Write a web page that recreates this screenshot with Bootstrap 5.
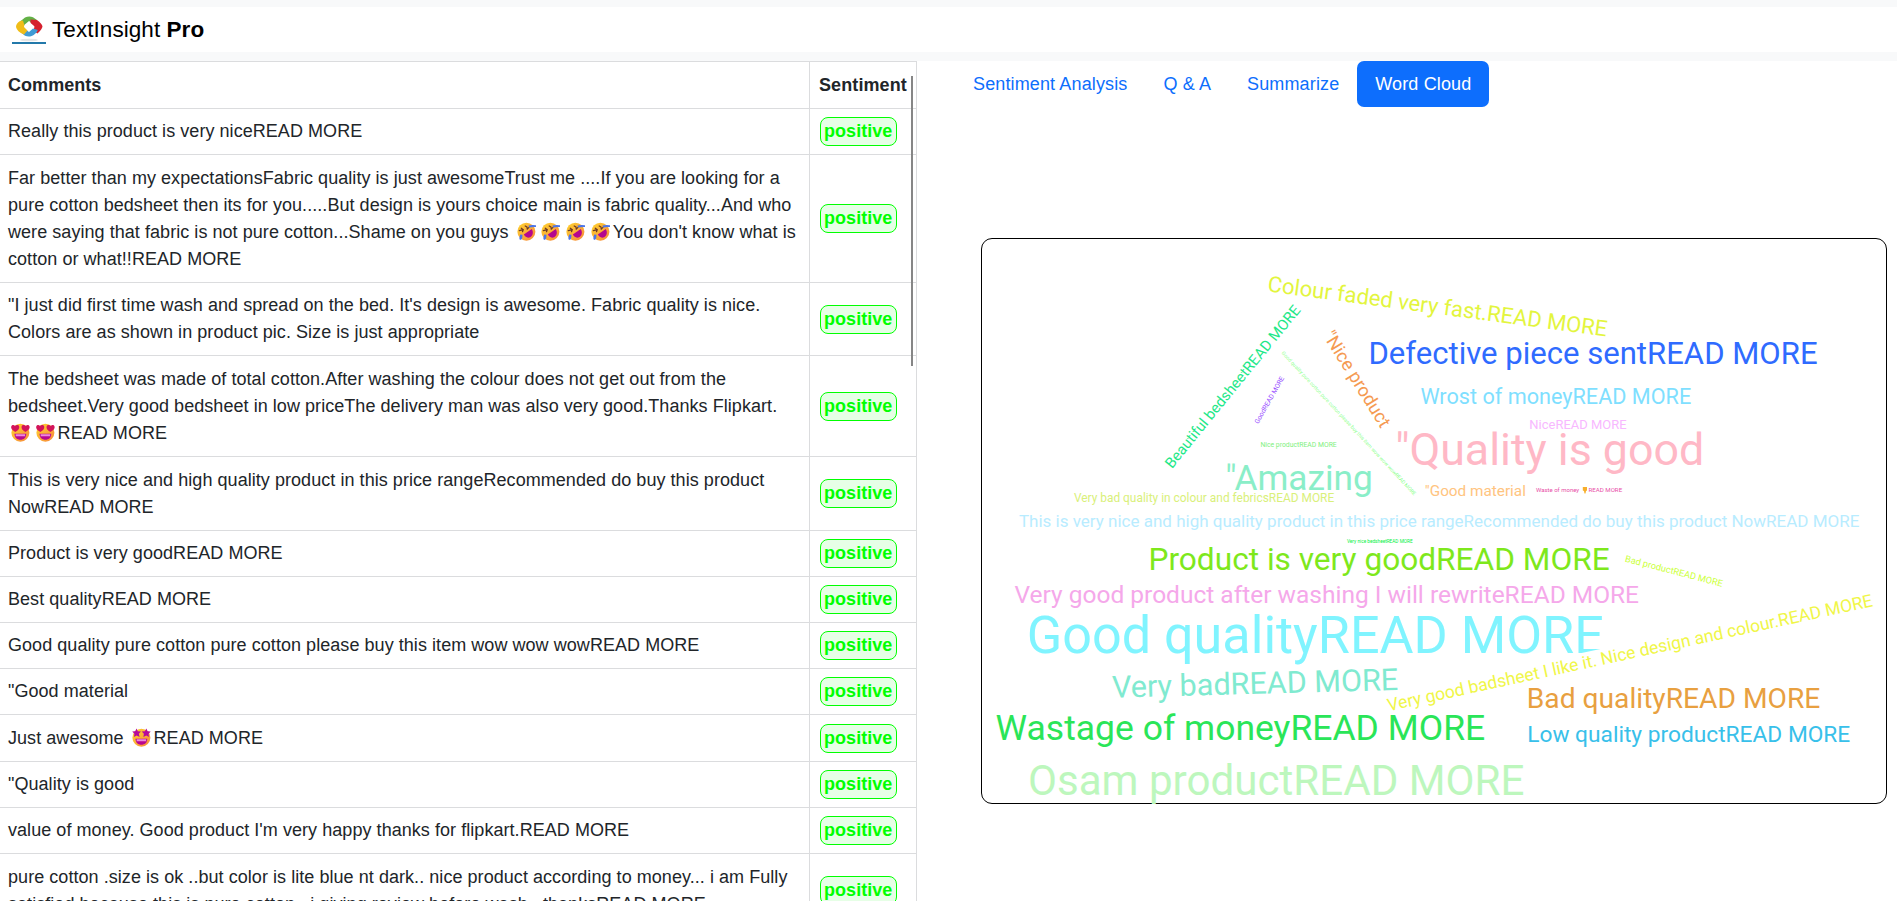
<!DOCTYPE html>
<html lang="en">
<head>
<meta charset="utf-8">
<meta name="viewport" content="width=device-width, initial-scale=1">
<title>TextInsight Pro</title>
<link href="https://cdn.jsdelivr.net/npm/bootstrap@5.3.0/dist/css/bootstrap.min.css" rel="stylesheet">
<style>
html{font-size:18px}
body{font-family:"Liberation Sans",Arial,sans-serif;height:901px;overflow:hidden;background:#fff}
.topbar{padding:7px 0 9px;background:#f8f9fa;height:61px}
.topbar .navbar{height:45px;padding:0 0 0 12px;background:#fff}
.topbar .navbar-brand{color:#000;font-size:22.5px;line-height:34px;padding:0;margin:0;letter-spacing:.06px}
.logo{width:34px;height:29px;margin-right:6px}
.panes{height:840px}
.comments{width:917px;overflow:hidden}
.comments .table{width:918px;margin-left:-1px;table-layout:fixed;color:#212529;border-collapse:collapse;letter-spacing:.052px}
.comments th,.comments td{padding:0 9px;vertical-align:middle;border:1px solid #dbdcde}
.comments th:first-child,.comments td:first-child{padding:0 8px}
.comments td:nth-child(2){padding-left:10px;padding-right:0}
.comments th:nth-child(2){padding-left:9px;padding-right:0;letter-spacing:.1px}
.comments th:first-child{width:810px}
.tag{display:inline-block;height:29px;line-height:26px;width:77px;padding-left:3px;border:1px solid #0f0;border-radius:8px;background:#e6ffe6;color:#0f0;font-weight:700;vertical-align:middle}
.h46{height:46px}.h47{height:47px}.h73{height:73px}.h74{height:74px}.h101{height:101px}.h128{height:128px}
.emo{width:24.8px;height:19px;vertical-align:-3.5px}
.thumb{position:absolute;left:911px;top:15px;width:2px;height:290px;background:#868686}
.tools{padding-left:38px;padding-right:10px}
.tools .nav-link{padding:9px 18px;line-height:28px;letter-spacing:.13px}
.tools .nav-pills .nav-link{border-radius:7px}
.cloud{display:block;width:906px;height:566px;margin:131px 0 0 26px;border:1px solid #000;border-radius:11px;overflow:visible;font-family:Roboto,sans-serif}
</style>
</head>
<body>
<svg width="0" height="0" class="position-absolute">
<defs>
<linearGradient id="face" x1="0" y1="0" x2="1" y2="1"><stop offset="0" stop-color="#ffd52e"/><stop offset="1" stop-color="#f7873d"/></linearGradient>
<symbol id="rofl" viewBox="0 0 24.8 19">
<circle cx="12.4" cy="9.7" r="9" fill="url(#face)"/>
<path d="M9.800 12.600 17.800 7c1.800 3 1.200 6.300-1.200 7.900-2.500 1.600-5.200.600-6.800-2.300z" fill="#b5068f"/>
<path d="M5.300 8.600l4-.900M7.300 6.200l2 1.500-.8 2M11.200 4l1.700.9.400 2.100 1.700-1.700" fill="none" stroke="#6b3a25" stroke-width="1.200" stroke-linecap="round"/>
<path d="M14.500 3.600q3-1 7.500-.300v1.700q-4-.2-6.800.4zM6.300 12.400l2.200.3q.3 3-1.500 5.300l-1.600-.8q-.1-2.600.900-4.800z" fill="#4c74e8"/>
</symbol>
<symbol id="star" viewBox="0 0 24.8 19">
<circle cx="12.4" cy="9.700" r="9" fill="url(#face)"/>
<path d="M7.500.5l1.300 2.800 3.200.200-2.200 2.300.8 3.200-3-1.500L5 9.100l.4-3.300L3.200 3.600l3-.4zM17.300.5l1.300 2.800 3.100.300-2.200 2.300.600 3.200-2.800-1.600-2.900 1.500.5-3.200L12.700 3.500l3.200-.300z" fill="#b5099c"/>
<path d="M6.500 10.700h11.800c-.2 4-2.500 6-5.900 6s-5.700-2-5.900-6z" fill="#b8078f"/><path d="M7.700 11.200h9.400v2H7.700z" fill="#ed8bdc"/>
</symbol>
<symbol id="heart" viewBox="0 0 24.8 19">
<circle cx="12.4" cy="9.700" r="9" fill="url(#face)"/>
<path d="M7.300 8.900C4 7.300 2.600 5.200 3.300 3.300c.7-1.700 2.900-1.700 3.700-.2 1-1.500 3.600-1.600 4.200.3.500 1.800-1 4.100-3.900 5.500zM17.500 8.900c-2.900-1.400-4.400-3.700-3.900-5.500.6-1.900 3.200-1.800 4.200-.3.800-1.500 3-1.500 3.700.2.700 1.900-.700 4-4 5.600z" fill="#d3145a"/>
<path d="M6.500 10.700h11.800c-.2 4-2.500 6-5.900 6s-5.700-2-5.900-6z" fill="#b8078f"/><path d="M7.700 11.200h9.400v2H7.700z" fill="#ed8bdc"/>
</symbol>
</defs>
</svg>

<header class="topbar">
<nav class="navbar d-flex justify-content-start align-items-center flex-nowrap">
<svg class="logo" viewBox="0 0 34 29">
<ellipse cx="17" cy="25" rx="9" ry="1.300" fill="#e3e5e6"/>
<path d="M8 6.500Q10 5 13 2.500 17 .6 21 2.200l4 2.800-4.500 3.500-3.500-2.500-6 5z" fill="#62b146"/>
<path d="M18.500 4.500l6.500.5q5 3.500 5.500 6.500-.5 3-5 7L21.500 16l1-4.500-4-3.500z" fill="#d5212e"/>
<path d="M25.800 15Q24 19.500 19 21.300q-3 .7-6-.5L9 17.500l4-3.500 4 3 4-3.500z" fill="#3f9bd5"/>
<path d="M11 5.500l1.500 5-.5 1.500 3.500 3.500-3.500 4Q5 16.500 4 12q0-3.500 4-6z" fill="#f0bd18"/>
<path d="M17 7l5 4.200-5 4.600-5-4.600z" fill="#fff"/>
<path d="M0 27h34v2H0z" fill="#2379aa"/>
</svg>
<a class="navbar-brand" href="#">TextInsight <b>Pro</b></a>
</nav>
</header>

<main class="panes d-flex">
<section class="comments position-relative flex-shrink-0">
<table class="table mb-0">
<thead><tr class="h47"><th>Comments</th><th>Sentiment</th></tr></thead>
<tbody>
<tr class="h46"><td>Really this product is very niceREAD MORE</td><td><span class="tag">positive</span></td></tr>
<tr class="h128"><td>Far better than my expectationsFabric quality is just awesomeTrust me ....If you are looking for a<br>pure cotton bedsheet then its for you.....But design is yours choice main is fabric quality...And who<br>were saying that fabric is not pure cotton...Shame on you guys <svg class="emo"><use href="#rofl"/></svg><svg class="emo"><use href="#rofl"/></svg><svg class="emo"><use href="#rofl"/></svg><svg class="emo"><use href="#rofl"/></svg>You don't know what is<br>cotton or what!!READ MORE</td><td><span class="tag">positive</span></td></tr>
<tr class="h73"><td>"I just did first time wash and spread on the bed. It's design is awesome. Fabric quality is nice.<br>Colors are as shown in product pic. Size is just appropriate</td><td><span class="tag">positive</span></td></tr>
<tr class="h101"><td>The bedsheet was made of total cotton.After washing the colour does not get out from the<br>bedsheet.Very good bedsheet in low priceThe delivery man was also very good.Thanks Flipkart.<br><svg class="emo"><use href="#heart"/></svg><svg class="emo"><use href="#heart"/></svg>READ MORE</td><td><span class="tag">positive</span></td></tr>
<tr class="h74"><td>This is very nice and high quality product in this price rangeRecommended do buy this product<br>NowREAD MORE</td><td><span class="tag">positive</span></td></tr>
<tr class="h46"><td>Product is very goodREAD MORE</td><td><span class="tag">positive</span></td></tr>
<tr class="h46"><td>Best qualityREAD MORE</td><td><span class="tag">positive</span></td></tr>
<tr class="h46"><td>Good quality pure cotton pure cotton please buy this item wow wow wowREAD MORE</td><td><span class="tag">positive</span></td></tr>
<tr class="h46"><td>"Good material</td><td><span class="tag">positive</span></td></tr>
<tr class="h47"><td>Just awesome <svg class="emo"><use href="#star"/></svg>READ MORE</td><td><span class="tag">positive</span></td></tr>
<tr class="h46"><td>"Quality is good</td><td><span class="tag">positive</span></td></tr>
<tr class="h46"><td>value of money. Good product I'm very happy thanks for flipkart.READ MORE</td><td><span class="tag">positive</span></td></tr>
<tr class="h74"><td>pure cotton .size is ok ..but color is lite blue nt dark.. nice product according to money... i am Fully<br>satisfied because this is pure cotton.. i giving review before wash.. thanksREAD MORE</td><td><span class="tag">positive</span></td></tr>
</tbody>
</table>
<div class="thumb"></div>
</section>

<section class="tools flex-grow-1">
<ul class="nav nav-pills">
<li class="nav-item"><a class="nav-link" href="#">Sentiment Analysis</a></li>
<li class="nav-item"><a class="nav-link" href="#">Q &amp; A</a></li>
<li class="nav-item"><a class="nav-link" href="#">Summarize</a></li>
<li class="nav-item"><a class="nav-link active" href="#">Word Cloud</a></li>
</ul>
<svg class="cloud" id="cloud" viewBox="982 239 904 564"></svg>
</section>
</main>

<script src="https://cdn.jsdelivr.net/npm/bootstrap@5.3.0/dist/js/bootstrap.bundle.min.js"></script>
<script>
// each word: text, baseline start x/y, baseline end x/y, colour
const words = [
['Colour faded very fast.READ MORE',1268,291.5,1605.7,336.3,'#e3f53e'],
['Defective piece sentREAD MORE',1370.9,363.7,1816.8,363.7,'#2f6bff'],
['Wrost of moneyREAD MORE',1420.8,404,1690.8,404,'#7fdfff'],
['NiceREAD MORE',1530.4,429,1626.3,429,'#f8b8ff'],
['"Quality is good',1397.8,465,1701.3,465,'#ffb8c6'],
['"Good material',1425.7,495.7,1524.8,495.7,'#ffc480'],
['Waste of money',1536,492,1579.3,492,'#e84fa8'],
['READ MORE',1589,492,1622,492,'#e84fa8'],
['"Amazing',1227.3,490,1370.7,490,'#8aeec8'],
['Very bad quality in colour and febricsREAD MORE',1074,502.3,1334,502.3,'#d9f07a'],
['This is very nice and high quality product in this price rangeRecommended do buy this product NowREAD MORE',1019.3,527.3,1859.3,527.3,'#b8ecff'],
['Very nice bedsheetREAD MORE',1347,543,1412.7,543,'#00f040'],
['Product is very goodREAD MORE',1151,569.7,1609,569.7,'#7ee81c'],
['Bad productREAD MORE',1625.3,561.7,1721.5,586.7,'#ccff3c'],
['Very good product after washing I will rewriteREAD MORE',1014.7,603,1638.3,603,'#f5a8ea'],
['Good qualityREAD MORE',1029.3,652.7,1602.3,652.7,'#80f4ff'],
['Very good badsheet I like it. Nice design and colour.READ MORE',1389,711.1,1873,606.3,'#f0f648'],
['Very badREAD MORE',1112.5,697.7,1397.7,690,'#80ead0'],
['Bad qualityREAD MORE',1529,708,1819.7,708,'#e8a040'],
['Low quality productREAD MORE',1529,742,1849.7,742,'#38c0ea'],
['Wastage of moneyREAD MORE',996.3,739.7,1484.3,739.7,'#2ae558'],
['Osam productREAD MORE',1030,794.7,1523.3,794.7,'#bdf7bd'],
['Beautiful bedsheetREAD MORE',1172.7,468.3,1301,310.7,'#1ee888'],
['"Nice product',1323.3,336.7,1380.7,428.7,'#f59a52'],
['Good quality pure cotton pure cotton please buy this item wow wow wowREAD MORE',1281.5,353.5,1413.9,495.9,'#90ff90'],
['GoodREAD MORE',1258.3,424,1284.3,378.3,'#9a50ff'],
['Nice productREAD MORE',1261,446.7,1336.7,446.7,'#7ef07e']
];
const NS = 'http://www.w3.org/2000/svg', svg = document.getElementById('cloud');
const ctx = document.createElement('canvas').getContext('2d');
ctx.font = '100px Roboto, sans-serif';
function shape(tag, attrs){
  const el = document.createElementNS(NS, tag);
  for (const k in attrs) el.setAttribute(k, attrs[k]);
  return svg.appendChild(el);
}
for (const [text,x0,y0,x1,y1,fill] of words){
  const m = ctx.measureText(text), ink = m.actualBoundingBoxRight + m.actualBoundingBoxLeft;
  const len = Math.hypot(x1-x0, y1-y0), size = len / ink * 100;
  const angle = Math.atan2(y1-y0, x1-x0) * 180 / Math.PI;
  // the long slanted phrase clears its own strip
  if (text.startsWith('Very good badsheet')) shape('polygon', {points:'1578,653.8 1604,648.3 1604,660 1578,660', fill:'#fff'});
  const t = shape('text', {x:m.actualBoundingBoxLeft*size/100, y:0, 'font-size':size.toFixed(2), fill,
    transform:`translate(${x0} ${y0}) rotate(${angle.toFixed(2)})`});
  t.textContent = text;
}
// thumbs-down glyph
shape('path', {d:'M1582.800 487h4.200v3.500l-1 .5-.500 2.500h-1l-.500-2.500-1.200-.500z', fill:'#f7ae2b'});
</script>
</body>
</html>
